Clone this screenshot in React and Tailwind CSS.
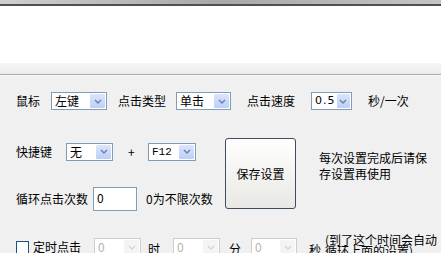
import React from "react";

const cjk = "font-['Noto_Sans_CJK_SC','Noto_Sans',sans-serif]";

function Chevron({ disabled }) {
  return (
    <svg width="8" height="5" viewBox="0 0 8 5">
      <path
        d="M1 1 L4 4 L7 1"
        fill="none"
        stroke={disabled ? "#d2d5dc" : "#6a7ea6"}
        strokeWidth="1.4"
      />
    </svg>
  );
}

// XP style combo box
function Combo({ value, w, disabled, font }) {
  return (
    <div
      className={`flex h-[18px] items-stretch border bg-white ${w} ${
        disabled ? "border-[#d0cec4]" : "border-[#7f9db9]"
      }`}
    >
      <span
        className={`flex-1 pl-[3px] leading-[16px] ${font || "text-[12px]"} ${
          disabled ? "text-[#b5b3a8]" : "text-black"
        }`}
      >
        {value}
      </span>
      <div
        className={`m-px flex w-[15px] items-center justify-center rounded-[1px] ${
          disabled
            ? "bg-[#f4f4f4]"
            : "bg-gradient-to-b from-[#dbe5fc] to-[#bccff8]"
        }`}
      >
        <Chevron disabled={disabled} />
      </div>
    </div>
  );
}

export default function App() {
  return (
    <div className={`flex h-[253px] w-[441px] flex-col overflow-hidden bg-[#f0f0f0] text-[12px] text-black ${cjk}`}>
      {/* window chrome */}
      <div className="h-[4px] shrink-0 bg-gradient-to-r from-[#cfcfcf] via-[#a8a8a8] to-[#c4c4c4]" />
      <div className="h-[2px] shrink-0 bg-[#505050]" />
      <div className="h-[57px] shrink-0 bg-white" />
      <div className="h-[11px] shrink-0 bg-gradient-to-b from-[#f6f6f6] to-[#ececec]" />
      <div className="h-px shrink-0 bg-[#a9a9a9]" />
      <div className="h-px shrink-0 bg-[#fafafa]" />

      <div className="flex shrink-0 flex-col pl-4 pt-[16px]">
        {/* row 1 */}
        <div className="flex h-[18px] items-center">
          <span className="w-[24px]">鼠标</span>
          <div className="ml-[11px]">
            <Combo value="左键" w="w-[56px]" />
          </div>
          <span className="ml-[11px]">点击类型</span>
          <div className="ml-[10px]">
            <Combo value="单击" w="w-[55px]" />
          </div>
          <span className="ml-[16px]">点击速度</span>
          <div className="ml-[16px]">
            <Combo
              value="0.5"
              w="w-[41px]"
              font="font-['DejaVu_Sans',sans-serif] text-[11px] tracking-[1px]"
            />
          </div>
          <span className="ml-[16px]">秒/一次</span>
        </div>

        {/* rows 2-3 with button */}
        <div className="mt-[28px] flex items-start">
          <div className="flex w-[209px] flex-col">
            <div className="mt-[4px] flex h-[19px] items-center">
              <span className="w-[36px]">快捷键</span>
              <div className="ml-[14px]">
                <Combo value="无" w="w-[47px]" />
              </div>
              <span className="ml-[15px] w-[6px] text-center">+</span>
              <div className="ml-[14px]">
                <Combo
                  value="F12"
                  w="w-[48px]"
                  font="font-['Liberation_Mono',monospace] text-[11px]"
                />
              </div>
            </div>
            <div className="mt-[26px] flex h-[24px] items-center">
              <span className="w-[72px]">循环点击次数</span>
              <div className="ml-[5px] h-[24px] w-[44px] border border-[#7f9db9] bg-white pl-[3px] pt-[1px] leading-[18px]">
                0
              </div>
              <span className="ml-[9px]">0为不限次数</span>
            </div>
          </div>

          <button className="flex h-[71px] w-[71px] items-center justify-center rounded-[3px] border border-[#3f4d5e] bg-gradient-to-b from-white to-[#e8e8e4] text-[12px]">
            保存设置
          </button>

          <div className="ml-[23px] mt-[12px] w-[114px] leading-[16px]">
            每次设置完成后请保存设置再使用
          </div>
        </div>

        {/* row 4 */}
        <div className="mt-[25px] flex items-start">
          <div className="mt-[5px] h-[13px] w-[13px] border border-[#1c5180] bg-white" />
          <span className="ml-[4px] mt-[2px]">定时点击</span>
          <div className="ml-[13px] mt-[2px]">
            <Combo value="0" w="w-[47px]" disabled />
          </div>
          <span className="ml-[7px] mt-[4px]">时</span>
          <div className="ml-[13px] mt-[2px]">
            <Combo value="0" w="w-[47px]" disabled />
          </div>
          <span className="ml-[9px] mt-[4px]">分</span>
          <div className="ml-[10px] mt-[2px]">
            <Combo value="0" w="w-[46px]" disabled />
          </div>
          <span className="ml-[12px] mt-[5px]">秒</span>
          <div className="ml-[4px] mt-[-2px] w-[115px] leading-[11px]">
            (到了这个时间会自动循环上面的设置)
          </div>
        </div>
      </div>
    </div>
  );
}
